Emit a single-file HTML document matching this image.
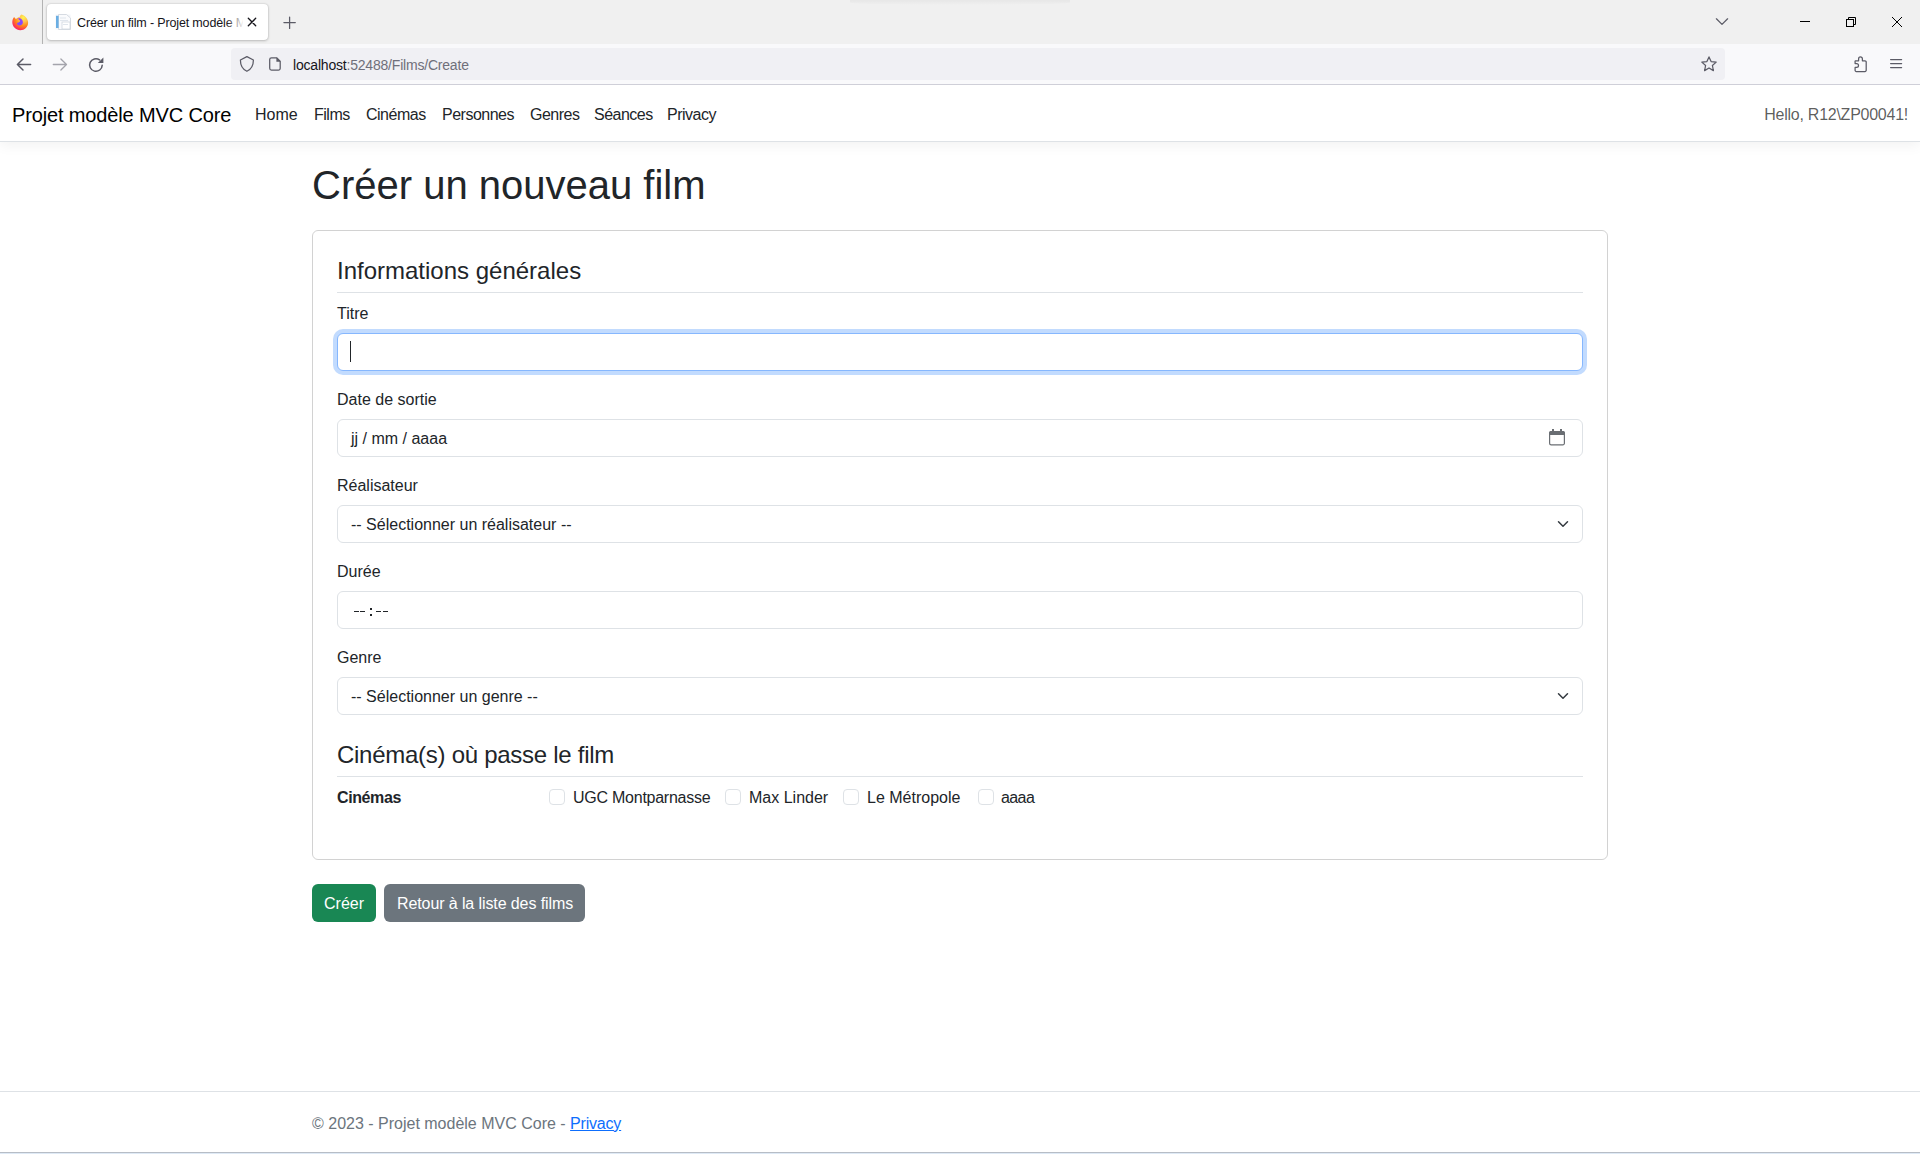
<!DOCTYPE html>
<html lang="fr">
<head>
<meta charset="utf-8">
<title>Créer un film - Projet modèle MVC Core</title>
<style>
*{box-sizing:border-box;margin:0;padding:0}
html,body{width:1920px;height:1154px;overflow:hidden;background:#fff}
body{font-family:"Liberation Sans",sans-serif;color:#212529;font-size:16px;line-height:24px;position:relative}
.abs{position:absolute}
/* ---------- browser chrome ---------- */
#tabstrip{left:0;top:0;width:1920px;height:44px;background:#f0f0f0}
#toolbar{left:0;top:44px;width:1920px;height:40px;background:#f9f9fb}
#tbline{left:0;top:84px;width:1920px;height:1px;background:#cfcfd8}
#sep{left:42px;top:0;width:1px;height:44px;background:#b3b3b3}
#tab{left:47px;top:4px;width:221px;height:36px;background:#fff;border-radius:4px;box-shadow:0 0 2px rgba(0,0,0,.2),0 1px 3px rgba(0,0,0,.18)}
#tabtitle{left:77px;top:14px;width:166px;height:18px;font-size:12.5px;letter-spacing:-0.15px;line-height:18px;color:#15141a;white-space:nowrap;overflow:hidden}
#urlbar{left:231px;top:48px;width:1494px;height:32px;background:#f0f0f4;border-radius:4px}
#urltext{left:293px;top:56px;font-size:14px;letter-spacing:-0.2px;line-height:18px;color:#15141a;white-space:nowrap}
#urltext span{color:#6f6f7a}
svg{display:block}
/* ---------- page ---------- */
#page{left:0;top:85px;width:1920px;height:1067px;background:#fff;overflow:hidden}
#winline{left:0;top:1152px;width:1920px;height:1px;background:#b7bdc6}
#winline2{left:0;top:1153px;width:1920px;height:1px;background:#dfeaf6}
#navbar{left:0;top:0;width:1920px;height:57px;border-bottom:1px solid #dee2e6;box-shadow:0 4px 12px rgba(0,0,0,.05);background:#fff}
.brand{left:12px;top:15px;letter-spacing:-0.14px;font-size:20px;line-height:30px;color:#000;white-space:nowrap}
.nl{top:15px;letter-spacing:-0.5px;font-size:16px;line-height:30px;color:#212529;white-space:nowrap}
.hello{top:15px;letter-spacing:-0.25px;font-size:16px;line-height:30px;color:rgba(0,0,0,.65);white-space:nowrap}
h1{position:absolute;left:312px;top:76px;font-size:40px;line-height:48px;font-weight:400;white-space:nowrap}
#card{left:312px;top:145px;width:1296px;height:630px;border:1px solid rgba(0,0,0,.175);border-radius:6px}
h4{position:absolute;left:337px;font-size:24px;line-height:29px;font-weight:400;white-space:nowrap}
.hr{position:absolute;left:337px;width:1246px;height:1px;background:#dee2e6}
.lbl{position:absolute;left:337px;font-size:16px;line-height:24px;white-space:nowrap}
.inp{position:absolute;left:337px;width:1246px;height:38px;border:1px solid #dee2e6;border-radius:6px;background:#fff}
.inp .t{position:absolute;left:13px;top:7px;font-size:16px;line-height:24px;white-space:nowrap}
.focus{border-color:#86b7fe;box-shadow:0 0 0 4px rgba(13,110,253,.25)}
.chk{position:absolute;width:16px;height:16px;border:1px solid #dee2e6;border-radius:4px;background:#fff}
.cl{position:absolute;font-size:16px;line-height:24px;white-space:nowrap}
.btn{position:absolute;height:38px;border-radius:6px;color:#fff;font-size:16px;line-height:24px;padding:8px 12px 4px;white-space:nowrap}
#footer{left:0;top:1006px;width:1920px;height:61px;border-top:1px solid #dee2e6}
#foottext{left:312px;top:20px;font-size:16px;line-height:24px;color:#6c757d;white-space:nowrap}
#foottext a{color:#0d6efd;text-decoration:underline;letter-spacing:-0.2px}
</style>
</head>
<body>
<!-- browser chrome -->
<div id="tabstrip" class="abs"></div>
<div id="toolbar" class="abs"></div>
<div id="tbline" class="abs"></div>
<div class="abs" style="left:850px;top:0;width:220px;height:5px;background:linear-gradient(to bottom,rgba(0,0,0,.04),rgba(0,0,0,0));border-radius:0 0 50% 50%"></div>
<div id="sep" class="abs"></div>
<div id="tab" class="abs"></div>
<div id="tabtitle" class="abs">Créer un film - Projet modèle MVC Core</div>
<div id="urlbar" class="abs"></div>
<div id="urltext" class="abs">localhost<span>:52488/Films/Create</span></div>

<svg class="abs" style="left:0;top:0" width="1920" height="85" viewBox="0 0 1920 85">
<defs>
<radialGradient id="ffg" cx="0.7" cy="0.2" r="0.95">
<stop offset="0" stop-color="#fff44f"/><stop offset="0.3" stop-color="#ffbd4f"/><stop offset="0.55" stop-color="#ff8a16"/><stop offset="0.8" stop-color="#ff3750"/><stop offset="1" stop-color="#e31587"/></radialGradient>
<radialGradient id="ffp" cx="0.45" cy="0.65" r="0.6"><stop offset="0" stop-color="#6e56ff"/><stop offset="1" stop-color="#9a3bff"/></radialGradient>
<linearGradient id="fade" x1="0" x2="1"><stop offset="0" stop-color="#fff" stop-opacity="0"/><stop offset="1" stop-color="#fff" stop-opacity="1"/></linearGradient>
</defs>
<!-- firefox logo -->
<path d="M21.6 14.4 C24.5 15.2 27.8 18.2 28.1 22.2 C28.3 26.8 24.6 30.2 20.3 30.2 C15.9 30.2 12.3 26.7 12.3 22.3 C12.3 20.3 13 18.4 14.2 17.1 C14.6 18 15.3 18.6 16.1 18.9 C17 17.8 18.4 17.2 19.7 17.3 C19.6 16.1 20.4 14.9 21.6 14.4 Z" fill="url(#ffg)"/>
<path d="M18.2 18 C20.4 17.9 22.7 19.2 22.9 21.9 C23 24.1 21.4 25.4 19.6 25.4 C17.9 25.4 16.8 24.2 17 22.9 C18.3 22.6 19.6 22 20.3 20.9 C19.3 20.3 18.5 19.3 18.2 18 Z" fill="url(#ffp)"/>
<!-- back / forward / reload -->
<g fill="none" stroke="#5b5b66" stroke-width="1.5" stroke-linecap="round" stroke-linejoin="round">
<path d="M30.6 64.5 H17.4 M23 59 L17.4 64.5 L23 70"/>
</g>
<g fill="none" stroke="#a4a4ac" stroke-width="1.3" stroke-linecap="round" stroke-linejoin="round">
<path d="M53.3 64.5 H66.5 M60.9 59 L66.5 64.5 L60.9 70"/>
</g>
<path d="M102.2 65.2 A6.3 6.3 0 1 1 99.6 59.9" fill="none" stroke="#5b5b66" stroke-width="1.5" stroke-linecap="round"/>
<path d="M103.4 57.4 V63 H97.8 Z" fill="#5b5b66"/>
<!-- shield -->
<path d="M246.9 56.6 L240.4 60 C240.4 65.5 242.6 69.3 246.9 71.3 C251.2 69.3 253.4 65.5 253.4 60 Z" fill="none" stroke="#5b5b66" stroke-width="1.25" stroke-linejoin="round"/>
<!-- page icon -->
<path d="M271.5 57.8 H276.8 L280.2 61.2 V68.3 A1.8 1.8 0 0 1 278.4 70.1 H271.5 A1.8 1.8 0 0 1 269.7 68.3 V59.6 A1.8 1.8 0 0 1 271.5 57.8 Z" fill="none" stroke="#5b5b66" stroke-width="1.25"/>
<path d="M276.4 57.5 L280.6 61.7 H276.4 Z" fill="#5b5b66"/>
<!-- star -->
<path d="M709 56.9 L711.1 61.6 L716.2 62.1 L712.4 65.5 L713.4 70.6 L709 68 L704.6 70.6 L705.6 65.5 L701.8 62.1 L706.9 61.6 Z" transform="translate(1000 0)" fill="none" stroke="#5b5b66" stroke-width="1.25" stroke-linejoin="round"/>
<!-- extensions puzzle -->
<path d="M1855.3 60.8 H1858.6 V58.9 A1.9 1.9 0 0 1 1862.4 58.9 V60.8 H1865 A1.2 1.2 0 0 1 1866.2 62 V70.3 A1.2 1.2 0 0 1 1865 71.5 H1856.3 A1.2 1.2 0 0 1 1855.1 70.3 V67.4 H1856.6 A1.9 1.9 0 0 0 1856.6 63.6 H1855.1 V62 A1.2 1.2 0 0 1 1855.3 60.8 Z" fill="none" stroke="#5b5b66" stroke-width="1.25" stroke-linejoin="round"/>
<!-- menu -->
<path d="M1890.6 59.6 H1901.6 M1890.6 63.6 H1901.6 M1890.6 67.6 H1901.6" stroke="#5b5b66" stroke-width="1.25" stroke-linecap="round"/>
<!-- tab list chevron -->
<path d="M1716.4 18.8 L1722 24.4 L1727.6 18.8" fill="none" stroke="#5b5b66" stroke-width="1.25" stroke-linecap="round" stroke-linejoin="round"/>
<!-- window controls -->
<path d="M1800 21.5 H1810" stroke="#000" stroke-width="1"/>
<rect x="1846.5" y="19.5" width="7" height="7" fill="none" stroke="#000" stroke-width="1"/>
<path d="M1848.5 19.5 V17.5 H1855.5 V24.5 H1853.5" fill="none" stroke="#000" stroke-width="1"/>
<path d="M1892 17 L1902 27 M1902 17 L1892 27" stroke="#000" stroke-width="1"/>
<!-- tab close & new tab -->
<path d="M248.3 18.3 L255.7 25.7 M255.7 18.3 L248.3 25.7" stroke="#15141a" stroke-width="1.3" stroke-linecap="round"/>
<path d="M283.9 22.6 H295.3 M289.6 17 V28.4" stroke="#5b5b66" stroke-width="1.25" stroke-linecap="round"/>
<!-- favicon -->
<rect x="55.5" y="14.5" width="15" height="15" fill="#f4f6f9"/>
<path d="M58.5 14.5 H66.5 L70.5 18 V29.5 H58.5 Z" fill="#fafbfd" stroke="#d6dbe2" stroke-width="1"/>
<rect x="56" y="15.8" width="2.6" height="12.2" fill="#6aaee3"/>
<rect x="62" y="22" width="8" height="7" fill="#fff" stroke="#cfd6df" stroke-width="0.8"/>
<path d="M60 18 H66 M60 20.5 H68 M63 24.5 H68" stroke="#dfe5ec" stroke-width="1"/>
<!-- tab title fade -->
<rect x="226" y="10" width="18" height="24" fill="url(#fade)"/>
</svg>
<!-- page -->
<div id="page" class="abs">
  <div id="navbar" class="abs">
    <div class="abs brand">Projet modèle MVC Core</div>
    <div class="abs nl" style="left:255px;letter-spacing:0">Home</div>
    <div class="abs nl" style="left:314px">Films</div>
    <div class="abs nl" style="left:366px">Cinémas</div>
    <div class="abs nl" style="left:442px">Personnes</div>
    <div class="abs nl" style="left:530px">Genres</div>
    <div class="abs nl" style="left:594px">Séances</div>
    <div class="abs nl" style="left:667px">Privacy</div>
    <div class="abs hello" style="right:12px">Hello, R12\ZP00041!</div>
  </div>
  <h1>Créer un nouveau film</h1>
  <div id="card" class="abs"></div>
  <h4 style="top:171px">Informations générales</h4>
  <div class="hr" style="top:207px"></div>
  <div class="lbl" style="top:217px">Titre</div>
  <div class="inp focus" style="top:248px"><div class="abs" style="left:12px;top:7px;width:1px;height:21px;background:#212529"></div></div>
  <div class="lbl" style="top:303px">Date de sortie</div>
  <div class="inp" style="top:334px"><div class="t">jj / mm / aaaa</div><svg class="abs" style="left:1211px;top:9px" width="16" height="17" viewBox="0 0 16 17"><rect x="3" y="0" width="2" height="3" fill="#6a6e73"/><rect x="11" y="0" width="2" height="3" fill="#6a6e73"/><path d="M2.2 2.6 H13.8 A1.6 1.6 0 0 1 15.4 4.2 V14.2 A1.6 1.6 0 0 1 13.8 15.8 H2.2 A1.6 1.6 0 0 1 0.6 14.2 V4.2 A1.6 1.6 0 0 1 2.2 2.6 Z" fill="none" stroke="#6a6e73" stroke-width="1.2"/><path d="M2 2 H14 A2 2 0 0 1 16 4 V6 H0 V4 A2 2 0 0 1 2 2 Z" fill="#6a6e73"/></svg></div>
  <div class="lbl" style="top:389px">Réalisateur</div>
  <div class="inp" style="top:420px"><div class="t">-- Sélectionner un réalisateur --</div><svg class="abs" style="left:1217px;top:12px" width="16" height="12" viewBox="0 0 16 16" preserveAspectRatio="xMidYMid meet"><path fill="none" stroke="#343a40" stroke-linecap="round" stroke-linejoin="round" stroke-width="2" d="m2 5 6 6 6-6"/></svg></div>
  <div class="lbl" style="top:475px">Durée</div>
  <div class="inp" style="top:506px"><div class="abs" style="left:16px;top:19px;width:5px;height:1px;background:#212529"></div><div class="abs" style="left:22px;top:19px;width:5px;height:1px;background:#212529"></div><div class="abs" style="left:32px;top:16px;width:1.5px;height:2px;background:#212529"></div><div class="abs" style="left:32px;top:22px;width:1.5px;height:2px;background:#212529"></div><div class="abs" style="left:38px;top:19px;width:5px;height:1px;background:#212529"></div><div class="abs" style="left:45px;top:19px;width:5px;height:1px;background:#212529"></div></div>
  <div class="lbl" style="top:561px">Genre</div>
  <div class="inp" style="top:592px"><div class="t">-- Sélectionner un genre --</div><svg class="abs" style="left:1217px;top:12px" width="16" height="12" viewBox="0 0 16 16" preserveAspectRatio="xMidYMid meet"><path fill="none" stroke="#343a40" stroke-linecap="round" stroke-linejoin="round" stroke-width="2" d="m2 5 6 6 6-6"/></svg></div>
  <h4 style="top:655px;letter-spacing:-0.27px">Cinéma(s) où passe le film</h4>
  <div class="hr" style="top:691px"></div>
  <div class="lbl" style="top:701px;font-weight:700;letter-spacing:-0.4px">Cinémas</div>
  <div class="chk" style="left:549px;top:704px"></div><div class="cl" style="left:573px;top:701px;letter-spacing:-0.25px">UGC Montparnasse</div>
  <div class="chk" style="left:725px;top:704px"></div><div class="cl" style="left:749px;top:701px">Max Linder</div>
  <div class="chk" style="left:843px;top:704px"></div><div class="cl" style="left:867px;top:701px">Le Métropole</div>
  <div class="chk" style="left:978px;top:704px"></div><div class="cl" style="left:1001px;top:701px;letter-spacing:-0.6px">aaaa</div>
  <div class="btn" style="left:312px;top:799px;width:64px;background:#198754">Créer</div>
  <div class="btn" style="left:384px;top:799px;width:201px;background:#6c757d;padding-left:13px;letter-spacing:-0.1px">Retour à la liste des films</div>
  <div id="footer" class="abs"><div id="foottext" class="abs">© 2023 - Projet modèle MVC Core - <a>Privacy</a></div></div>
</div>
<div id="winline" class="abs"></div><div id="winline2" class="abs"></div>
</body>
</html>
